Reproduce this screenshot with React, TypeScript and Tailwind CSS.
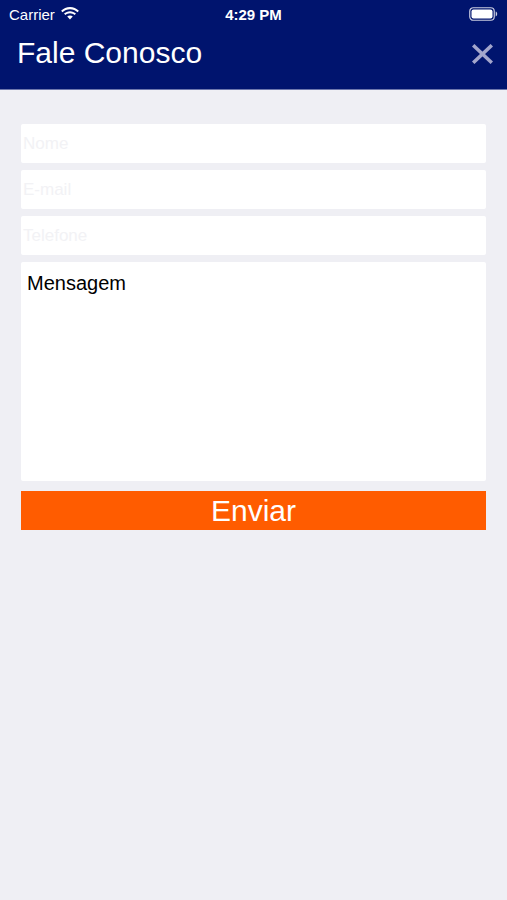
import { useState } from "react";

function WifiIcon() {
  return (
    <svg width="18" height="14" viewBox="0 0 18 14" fill="white">
      <path d="M9 2.2c2.9 0 5.5 1.1 7.5 3l1.4-1.5C15.5 1.4 12.4 0 9 0S2.5 1.4.1 3.7l1.4 1.5c2-1.9 4.6-3 7.5-3z" />
      <path d="M9 6.3c1.8 0 3.4.7 4.6 1.8l1.4-1.5C13.4 5.1 11.3 4.2 9 4.2S4.6 5.1 3 6.6l1.4 1.5C5.6 7 7.2 6.3 9 6.3z" />
      <path d="M9 8.4c-1.1 0-2 .4-2.8 1.1L9 12.6l2.8-3.1C11 8.8 10.1 8.4 9 8.4z" />
    </svg>
  );
}

function BatteryIcon() {
  return (
    <svg width="29" height="14" viewBox="0 0 29 14">
      <rect x="0.75" y="0.75" width="24.5" height="12.5" rx="3.5" fill="none" stroke="#c9cce0" strokeWidth="1.2" />
      <rect x="2.5" y="2.5" width="21" height="9" rx="2" fill="white" />
      <path d="M26.7 4.6v4.8c.9-.3 1.5-1.3 1.5-2.4s-.6-2.1-1.5-2.4z" fill="#c9cce0" />
    </svg>
  );
}

function CloseIcon() {
  return (
    <svg width="21" height="20" viewBox="0 0 21 20" stroke="#a3a6cc" strokeWidth="3.6" strokeLinecap="square">
      <line x1="2.5" y1="2.5" x2="18.5" y2="17.5" />
      <line x1="18.5" y1="2.5" x2="2.5" y2="17.5" />
    </svg>
  );
}

const fieldClass =
  "h-[39px] w-full bg-white rounded-[2px] px-[2px] text-[17px] text-black outline-none placeholder:text-[#f2f2f5]";

export default function App() {
  const [message, setMessage] = useState("");

  return (
    <div className="min-h-[900px] bg-[#efeff4] font-['Liberation_Sans',Arial,sans-serif]">
      <header className="h-[90px] bg-[#00146e] border-b border-[#6d77ad] flex flex-col">
        <div className="h-[28px] flex items-center justify-between px-[9px] text-white">
          <div className="flex items-center gap-[6px] w-[120px]">
            <span className="text-[15px] leading-none">Carrier</span>
            <WifiIcon />
          </div>
          <span className="text-[15px] font-semibold leading-none">4:29 PM</span>
          <div className="w-[120px] flex justify-end">
            <BatteryIcon />
          </div>
        </div>
        <div className="flex-1 flex items-start justify-between pt-[8px] pl-[17px] pr-[14px]">
          <h1 className="text-[30px] leading-[34px] text-white">Fale Conosco</h1>
          <button className="mt-[8px]" aria-label="Fechar">
            <CloseIcon />
          </button>
        </div>
      </header>

      <main className="px-[21px] pt-[34px] flex flex-col">
        <div className="flex flex-col gap-[7px]">
          <input className={fieldClass} placeholder="Nome" />
          <input className={fieldClass} placeholder="E-mail" />
          <input className={fieldClass} placeholder="Telefone" />
          <textarea
            className="h-[219px] w-full bg-white rounded-[2px] resize-none outline-none px-[6px] pt-[10px] text-[20px] leading-[23px] text-black placeholder:text-black"
            placeholder="Mensagem"
            value={message}
            onChange={(e) => setMessage(e.target.value)}
          />
        </div>
        <button className="mt-[10px] h-[39px] w-full bg-[#ff5c00] text-white text-[30px] leading-none">
          Enviar
        </button>
      </main>
    </div>
  );
}
